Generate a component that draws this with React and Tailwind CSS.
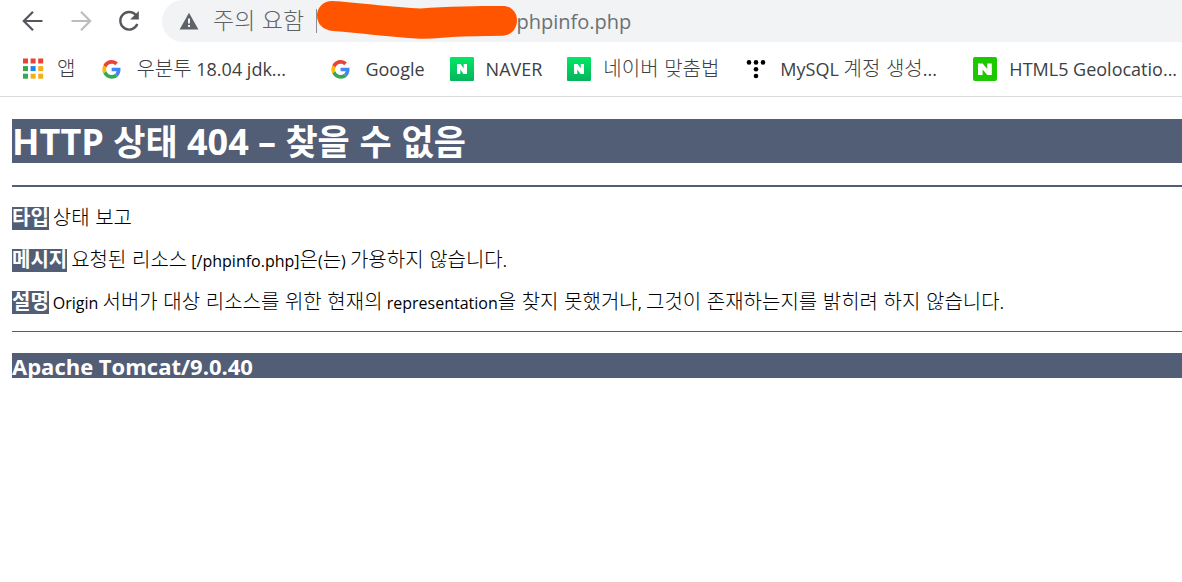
import { Fragment } from "react";

// Hangul comes from its own family and runs slightly larger than the Latin
// text around it, so mixed strings are split and each run gets its own size.
function Mixed({ text, hangul }) {
  return text.split(/([가-힣]+(?:\s+[가-힣]+)*)/).map((part, i) =>
    i % 2 ? (
      <span key={i} lang="ko" className={`font-['Noto_Sans_CJK_KR',sans-serif] leading-none ${hangul}`}>
        {part}
      </span>
    ) : (
      <Fragment key={i}>{part}</Fragment>
    )
  );
}

function BackIcon() {
  return (
    <svg viewBox="0 0 24 24" className="size-6" fill="none" stroke="currentColor" strokeWidth="2.2">
      <path d="M21.5 12H3.5M12 2.8 2.8 12l9.2 9.2" />
    </svg>
  );
}

function ForwardIcon() {
  return (
    <svg viewBox="0 0 24 24" className="size-6" fill="none" stroke="currentColor" strokeWidth="2.2">
      <path d="M2.5 12h18M12 2.8l9.2 9.2-9.2 9.2" />
    </svg>
  );
}

function ReloadIcon() {
  return (
    <svg viewBox="0 0 24 24" className="size-6" fill="none">
      <path
        d="M18.6 5.800A8.800 8.800 0 1 0 20.300 15"
        stroke="currentColor"
        strokeWidth="2.4"
      />
      <path d="M21.800 2v8.600h-8.600z" fill="currentColor" />
    </svg>
  );
}

function WarningIcon() {
  return (
    <svg viewBox="0 0 20 18" className="h-[18px] w-5 shrink-0">
      <path d="M10 .8 19.400 17.500H.6z" fill="#5f6368" />
      <path d="M9 6.600h2v5H9zM9 13h2v2H9z" fill="#f1f3f4" />
    </svg>
  );
}

const APP_DOTS = [
  "#ea4335", "#ea4335", "#ea4335",
  "#34a853", "#1a84ee", "#f4ae1b",
  "#34a853", "#f4ae1b", "#f4ae1b",
];

function AppsIcon() {
  return (
    <svg viewBox="0 0 24 24" className="size-6 shrink-0">
      {APP_DOTS.map((fill, i) => (
        <rect key={i} x={2 + (i % 3) * 7.6} y={1.5 + Math.floor(i / 3) * 7.6} width="5" height="5" fill={fill} />
      ))}
    </svg>
  );
}

function GoogleIcon() {
  return (
    <svg viewBox="-6 -8 62 62" className="size-6 shrink-0">
      <path fill="#EA4335" d="M24 9.5c3.54 0 6.71 1.22 9.21 3.6l6.85-6.85C35.9 2.38 30.47 0 24 0 14.62 0 6.51 5.38 2.56 13.22l7.98 6.19C12.43 13.72 17.74 9.5 24 9.5z" />
      <path fill="#4285F4" d="M46.98 24.55c0-1.57-.15-3.09-.38-4.55H24v9.02h12.94c-.58 2.96-2.26 5.48-4.78 7.18l7.73 6c4.51-4.18 7.09-10.36 7.09-17.65z" />
      <path fill="#FBBC05" d="M10.53 28.59c-.48-1.45-.76-2.99-.76-4.59s.27-3.14.76-4.59l-7.98-6.19C.92 16.46 0 20.12 0 24c0 3.88.92 7.54 2.56 10.78l7.97-6.19z" />
      <path fill="#34A853" d="M24 48c6.48 0 11.93-2.13 15.89-5.81l-7.73-6c-2.15 1.45-4.92 2.3-8.16 2.3-6.26 0-11.57-4.22-13.47-9.91l-7.98 6.19C6.51 42.62 14.62 48 24 48z" />
    </svg>
  );
}

function NaverIcon() {
  return (
    <svg viewBox="0 0 24 24" className="size-6 shrink-0">
      <defs>
        <linearGradient id="naver" x1="0" y1="0" x2="0" y2="1">
          <stop offset="0" stopColor="#03e765" />
          <stop offset="1" stopColor="#05b45c" />
        </linearGradient>
      </defs>
      <rect width="24" height="24" rx="1" fill="url(#naver)" />
      <path d="M7 7h3.6l3.1 4.6V7H17v10h-3.5l-3.2-4.6V17H7z" fill="#fff" />
    </svg>
  );
}

function BlogIcon() {
  return (
    <svg viewBox="0 0 24 24" className="size-6 shrink-0">
      <rect width="24" height="24" rx="2" fill="#1ec800" />
      <path d="M5 6.5h4.6l4.6 5.4V6.5h4.6v11.4h-4.5l-4.7-5.5v5.5H5z" fill="#fff" />
    </svg>
  );
}

function TistoryIcon() {
  return (
    <svg viewBox="0 0 24 24" className="size-6 shrink-0" fill="#000">
      <circle cx="5" cy="5.4" r="2.3" />
      <circle cx="12" cy="5.4" r="2.3" />
      <circle cx="19" cy="5.4" r="2.3" />
      <circle cx="12" cy="12.2" r="2.3" />
      <circle cx="12" cy="19" r="2.3" />
    </svg>
  );
}

const BOOKMARKS = [
  { icon: AppsIcon, label: "앱" },
  { icon: GoogleIcon, label: "우분투 18.04 jdk...", long: true },
  { icon: GoogleIcon, label: "Google" },
  { icon: NaverIcon, label: "NAVER" },
  { icon: NaverIcon, label: "네이버 맞춤법" },
  { icon: TistoryIcon, label: "MySQL 계정 생성...", long: true },
  { icon: BlogIcon, label: "HTML5 Geolocatio...", long: true },
];

function Toolbar() {
  return (
    <div className="flex h-[42px] items-center overflow-hidden pl-[21px] text-[#54575b]">
      <div className="flex shrink-0 gap-6">
        <button type="button" aria-label="뒤로"><BackIcon /></button>
        <button type="button" aria-label="앞으로" className="text-[#bbbdbf]"><ForwardIcon /></button>
        <button type="button" aria-label="새로고침"><ReloadIcon /></button>
      </div>
      <div className="relative ml-[21px] flex h-full min-w-0 flex-1 items-center rounded-l-full bg-[#f1f3f4] pl-[17px]">
        <WarningIcon />
        <span className="ml-3.5 shrink-0 whitespace-nowrap text-[#5f6368]">
          <Mixed text="주의 요함" hangul="text-[23px] font-light" />
        </span>
        <span className="ml-3 h-6 w-px shrink-0 bg-[#8c8f93]" />
        <input
          aria-label="주소"
          defaultValue="/phpinfo.php"
          className="ml-48 min-w-0 flex-1 bg-transparent pt-0.5 text-xl text-[#6c7074] outline-none"
        />
        {/* Marker stroke hiding the host name */}
        <svg viewBox="0 0 200 40" className="absolute left-[155px] top-0 h-10 w-[200px]">
          <path
            d="M15 1C37 2 72 7 103 8.500C130 6.500 160 6 186 6C194 6 200 12 200 20C200 29 194 35.500 185 35.700L145 36.500C130 37 118 39 103 38.700C72 37 42 33 16 31C6 30 0 24 0 15.500C0 7 7 1 15 1z"
            fill="#ff5500"
          />
        </svg>
      </div>
    </div>
  );
}

function BookmarkBar() {
  return (
    <nav className="flex h-[54px] items-center gap-[25px] overflow-hidden pl-[21px] text-lg text-[#3c4043]">
      {BOOKMARKS.map(({ icon: Icon, label, long }) => (
        <a key={label} href="#" className="flex shrink-0 items-center gap-3">
          <Icon />
          <span className={`whitespace-nowrap leading-6 ${long ? "w-42" : ""}`}>
            <Mixed text={label} hangul="text-[20px] font-light" />
          </span>
        </a>
      ))}
    </nav>
  );
}

const DETAILS = [
  { label: "타입", text: "상태 보고" },
  { label: "메시지", text: "요청된 리소스 [/phpinfo.php]은(는) 가용하지 않습니다." },
  {
    label: "설명",
    text: "Origin 서버가 대상 리소스를 위한 현재의 representation을 찾지 못했거나, 그것이 존재하는지를 밝히려 하지 않습니다.",
  },
];

function ErrorReport() {
  return (
    <main className="pl-3 pt-[22px] text-black">
      <h1 className="h-11 whitespace-nowrap bg-[#525d76] text-[36px] font-bold leading-[46px] text-white">
        <Mixed text="HTTP 상태 404 – 찾을 수 없음" hangul="text-[35px]" />
      </h1>
      <hr className="mb-5 mt-[22px] h-0.5 border-0 bg-[#525d76]" />
      <div className="flex flex-col gap-5">
        {DETAILS.map(({ label, text }) => (
          <p key={label} className="flex h-[22px] items-center gap-1 whitespace-nowrap text-base leading-[22px]">
            <b className="bg-[#525d76] text-white">
              <Mixed text={label} hangul="text-[20px]" />
            </b>
            <span>
              <Mixed text={text} hangul="text-[20px] font-light" />
            </span>
          </p>
        ))}
      </div>
      <hr className="mb-[21px] mt-[18px] h-px border-0 bg-[#525d76]" />
      <h3 className="h-[25px] bg-[#525d76] text-[22px] font-bold leading-[26px] text-white">Apache Tomcat/9.0.40</h3>
    </main>
  );
}

export default function App() {
  return (
    <div className="min-h-screen overflow-hidden bg-white font-['Open_Sans','Noto_Sans_CJK_KR',sans-serif]">
      <header className="border-b border-[#dadce0]">
        <Toolbar />
        <BookmarkBar />
      </header>
      <ErrorReport />
    </div>
  );
}
